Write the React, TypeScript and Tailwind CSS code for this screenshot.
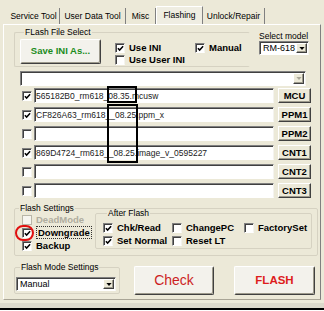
import React from "react";

const sunken =
  "border border-t-[#808080] border-l-[#808080] border-b-white border-r-[#f4f3ee] shadow-[inset_1px_1px_0_#404040]";
const raised =
  "border border-t-white border-l-white border-b-[#404040] border-r-[#404040] shadow-[inset_-1px_-1px_0_#9d9a8c]";

function Box({ on, off }: { on?: boolean; off?: boolean }) {
  return (
    <span
      className={`flex h-[10px] w-[10px] shrink-0 items-center justify-center ${
        off ? "border border-[#b9b6a8] bg-[#f6f5f0]" : `${sunken} bg-white`
      }`}
    >
      {on && (
        <svg viewBox="0 0 8 8" className="ml-[1px] mt-[1px] h-[7px] w-[7px]">
          <path d="M1 3.6 L3 5.8 L7 1.4" fill="none" stroke="#000" strokeWidth="1.7" />
        </svg>
      )}
    </span>
  );
}

function Opt({ label, on, off, focus }: { label: string; on?: boolean; off?: boolean; focus?: boolean }) {
  return (
    <div className="flex h-[13px] items-center gap-[4px]">
      <Box on={on} off={off} />
      <span
        className={`text-[9.5px] font-bold leading-[11px] ${off ? "text-[#b0ad9f]" : "text-black"} ${
          focus ? "border border-dotted border-[#333] px-[1px]" : ""
        }`}
      >
        {label}
      </span>
    </div>
  );
}

function Arrow({ dim }: { dim?: boolean }) {
  return (
    <span className={`flex h-full w-[11px] shrink-0 items-center justify-center bg-[#ece9d8] ${raised}`}>
      <svg viewBox="0 0 7 4" className="h-[3px] w-[6px]">
        <path d="M0 0 H7 L3.5 4 Z" fill={dim ? "#a7a496" : "#000"} />
      </svg>
    </span>
  );
}

function Combo({ text, w, h, dim }: { text: string; w: string; h: string; dim?: boolean }) {
  return (
    <div className={`flex items-stretch bg-white p-[1px] ${sunken} ${w} ${h}`}>
      <span className="flex-1 pl-[2px] text-[9px] leading-[11px] text-black">{text}</span>
      <Arrow dim={dim} />
    </div>
  );
}

const rows = [
  { on: true, text: "565182B0_rm618_08.35.mcusw", btn: "MCU" },
  { on: true, text: "CF826A63_rm618__08.25.ppm_x", btn: "PPM1" },
  { on: false, text: "", btn: "PPM2" },
  { on: true, text: "869D4724_rm618__08.25.image_v_0595227", btn: "CNT1" },
  { on: false, text: "", btn: "CNT2" },
  { on: false, text: "", btn: "CNT3" },
];

const tabs = [
  { t: "Service Tool", w: "w-[52px]" },
  { t: "User Data Tool", w: "w-[66px]" },
  { t: "Misc", w: "w-[30px]" },
  { t: "Flashing", w: "w-[47px]", sel: true },
  { t: "Unlock/Repair", w: "w-[62px]" },
];

export default function App() {
  return (
    <div className="relative h-[311px] w-[324px] overflow-hidden bg-white font-['Liberation_Sans',Arial,sans-serif] text-[8.5px] text-black">
      <div className="flex h-[308px] flex-col bg-[#ece9d8] pt-[8px]">
        {/* tabs */}
        <div className="flex h-[16px] items-stretch pl-[8px]">
          {tabs.map((tab) => (
            <div
              key={tab.t}
              className={`flex items-center justify-center border-r border-[#808080] text-[8.5px] ${tab.w} ${
                tab.sel ? "-mt-[2px] h-[18px] border-l border-t border-l-white border-t-white bg-[#efede2]" : ""
              }`}
            >
              {tab.t}
            </div>
          ))}
        </div>

        {/* tab page */}
        <div className="mx-[3px] flex h-[276px] flex-col border border-t-white border-l-white border-r-[#808080] border-b-[#a9a596] pl-[10px]">
          <div className="mt-[2px] flex items-start">
            <fieldset className="h-[40px] w-[236px] rounded-[2px] border border-[#d6d2c2] border-r-transparent pl-[5px] pt-[2px]">
              <legend className="ml-[4px] px-[1px] text-[8.5px] leading-[10px]">FLash File Select</legend>
              <div className="flex items-start">
                <button
                  className={`h-[25px] w-[81px] rounded-[2px] bg-[#f3f2ec] text-[9.5px] font-bold text-[#1c8c1c] ${raised}`}
                >
                  Save INI As...
                </button>
                <div className="ml-[14px] mt-[2px] flex w-[80px] flex-col">
                  <Opt label="Use INI" on />
                  <div className="-mt-[1px]">
                    <Opt label="Use User INI" />
                  </div>
                </div>
                <div className="mt-[2px]">
                  <Opt label="Manual" on />
                </div>
              </div>
            </fieldset>
            <div className="ml-[9px] mt-[4px] flex flex-col">
              <span className="text-[8.5px] leading-[10px]">Select model</span>
              <Combo text="RM-618" w="w-[50px]" h="h-[14px]" />
            </div>
          </div>

          <div className="ml-[6px] mt-[4px]">
            <Combo text="" w="w-[286px]" h="h-[15px]" dim />
          </div>

          <div className="mt-[2px] flex flex-col gap-[4px]">
            {rows.map((r) => (
              <div key={r.btn} className="flex h-[15px] items-center">
                <span className="ml-[8px]">
                  <Box on={r.on} />
                </span>
                <div className={`ml-[2px] flex h-[15px] w-[240px] items-center bg-white pl-[1px] ${sunken}`}>
                  <span className="whitespace-nowrap text-[8.5px] leading-[10px] text-[#222]">{r.text}</span>
                </div>
                <button
                  className={`ml-[4px] h-[15px] w-[33px] bg-[#ece9d8] text-[9.5px] font-bold leading-[10px] ${raised}`}
                >
                  {r.btn}
                </button>
              </div>
            ))}
          </div>

          <fieldset className="mt-[5px] h-[53px] w-[304px] rounded-[2px] border border-[#d6d2c2]">
            <legend className="ml-[4px] px-[1px] text-[8.5px] leading-[10px]">Flash Settings</legend>
            <div className="flex items-start">
              <div className="flex w-[80px] flex-col pl-[7px]">
                <Opt label="DeadMode" off />
                <Opt label="Downgrade" on focus />
                <Opt label="Backup" on />
              </div>
              <fieldset className="-mt-[5px] w-[217px] rounded-[2px] border border-[#d6d2c2] pb-[1px] pl-[7px] pt-[3px]">
                <legend className="ml-[4px] px-[1px] text-[8.5px] leading-[10px]">After Flash</legend>
                <div className="grid grid-cols-[69px_72px_auto]">
                  <Opt label="Chk/Read" on />
                  <Opt label="ChangePC" />
                  <Opt label="FactorySet" />
                  <Opt label="Set Normal" on />
                  <Opt label="Reset LT" />
                </div>
              </fieldset>
            </div>
          </fieldset>

          <div className="mt-[6px] flex items-start">
            <fieldset className="w-[106px] rounded-[2px] border border-[#d6d2c2] pb-[2px] pl-[1px] pt-[5px]">
              <legend className="ml-[4px] px-[1px] text-[8.5px] leading-[10px]">Flash Mode Settings</legend>
              <Combo text="Manual" w="w-[100px]" h="h-[14px]" />
            </fieldset>
            <button
              className={`ml-[14px] mt-[4px] h-[29px] w-[80px] rounded-[2px] bg-[#f3f2ec] text-[14px] text-[#cc1f1f] ${raised}`}
            >
              Check
            </button>
            <button
              className={`ml-[20px] mt-[4px] h-[29px] w-[81px] rounded-[2px] bg-[#f3f2ec] text-[11.5px] font-bold text-[#dd1c1c] ${raised}`}
            >
              FLASH
            </button>
          </div>
        </div>

        <div className="mt-[3px] h-[5px] bg-[#dcd9cb]" />
      </div>
      <div className="h-[2px] bg-black" />

      {/* annotations drawn over the screenshot */}
      <div className="absolute left-[107px] top-[86px] h-[17px] w-[30px] border-2 border-black" />
      <div className="absolute left-[107px] top-[104px] h-[59px] w-[31px] border-2 border-black" />
      <div className="absolute left-[15px] top-[225px] h-[16px] w-[19px] rounded-full border-2 border-[#e01010]" />
    </div>
  );
}
